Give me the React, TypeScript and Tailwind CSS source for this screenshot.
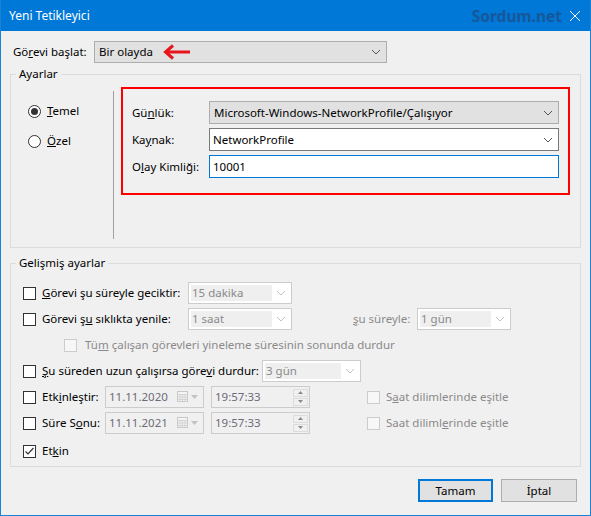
import React from 'react';

const font = { fontFamily: '"Noto Sans", "Segoe UI", sans-serif' };

function Chevron({ color = '#555' }: { color?: string }) {
    return (
        <svg width="10" height="6" viewBox="0 0 10 6" className="shrink-0">
            <polyline points="1,1 5,5 9,1" fill="none" stroke={color} strokeWidth="1" />
        </svg>
    );
}

function Check({ checked = false, disabled = false }: { checked?: boolean; disabled?: boolean }) {
    return (
        <span
            className={`w-[13px] h-[13px] shrink-0 border flex items-center justify-center ${
                disabled ? 'border-[#cccccc] bg-[#f7f7f7]' : 'border-[#333333] bg-white'
            }`}
        >
            {checked && (
                <svg width="11" height="11" viewBox="0 0 11 11">
                    <polyline points="1.5,5.5 4,8 9.5,2" fill="none" stroke="#333" strokeWidth="1.2" />
                </svg>
            )}
        </span>
    );
}

function Radio({ checked = false }: { checked?: boolean }) {
    return (
        <span className="w-[13px] h-[13px] shrink-0 rounded-full border border-[#333333] bg-white flex items-center justify-center">
            {checked && <span className="w-[7px] h-[7px] rounded-full bg-[#333333]" />}
        </span>
    );
}

function DisabledSelect({ value, w }: { value: string; w: string }) {
    return (
        <div className={`${w} h-[22px] border border-[#cccccc] bg-white flex items-center p-[2px]`}>
            <span className="flex-1 h-full bg-[#efefef] text-[#8a8a8a] pl-[1px] leading-[16px]">{value}</span>
            <span className="w-[17px] flex justify-center">
                <Chevron color="#c2c2c2" />
            </span>
        </div>
    );
}

function DateBox({ value }: { value: string }) {
    return (
        <div className="w-[99px] h-[22px] border border-[#cccccc] flex items-center pl-[3px] pr-[5px]">
            <span className="flex-1 text-[#6e6a78]">{value}</span>
            <svg width="12" height="12" viewBox="0 0 12 12" className="mr-[2px]">
                <rect x="0.5" y="0.5" width="10" height="10" fill="#f4f4f4" stroke="#c8c8c8" />
                <path d="M0.5 3.5h10M0.5 6h10M0.5 8.5h10M3 3.5v7M5.5 3.5v7M8 3.5v7" stroke="#d4d4d4" />
            </svg>
            <svg width="7" height="4" viewBox="0 0 7 4">
                <polygon points="0,0 7,0 3.5,4" fill="#c2c2c2" />
            </svg>
        </div>
    );
}

function TimeBox({ value }: { value: string }) {
    return (
        <div className="w-[99px] h-[22px] border border-[#cccccc] flex items-center pl-[3px] pr-[1px]">
            <span className="flex-1 text-[#6e6a78]">{value}</span>
            <div className="flex flex-col gap-[1px]">
                <span className="w-[15px] h-[8px] bg-[#f0f0f0] border border-[#dcdcdc] flex items-center justify-center">
                    <svg width="5" height="3" viewBox="0 0 5 3">
                        <polygon points="0,3 5,3 2.5,0" fill="#8a8a8a" />
                    </svg>
                </span>
                <span className="w-[15px] h-[8px] bg-[#f0f0f0] border border-[#dcdcdc] flex items-center justify-center">
                    <svg width="5" height="3" viewBox="0 0 5 3">
                        <polygon points="0,0 5,0 2.5,3" fill="#8a8a8a" />
                    </svg>
                </span>
            </div>
        </div>
    );
}

export default function App() {
    return (
        <div
            className="w-[591px] h-[516px] bg-[#f0f0f0] border-x border-b border-[#1883d7] flex flex-col text-[11.5px] text-black leading-[16px] whitespace-nowrap"
            style={font}
        >
            {/* title bar */}
            <div className="h-[31px] shrink-0 bg-[#0078d7] flex items-center pl-[8px] pr-[9px] text-white text-[12px]">
                <span className="flex-1">Yeni Tetikleyici</span>
                <span className="text-[15.5px] font-bold text-[#17579a] mr-[7px]">Sordum.net</span>
                <svg width="12" height="12" viewBox="0 0 12 12">
                    <path d="M1 1L11 11M11 1L1 11" stroke="white" strokeWidth="1" />
                </svg>
            </div>

            <div className="flex-1 px-[9px] flex flex-col">
                {/* trigger type */}
                <div className="mt-[10px] h-[22px] flex items-center">
                    <span className="w-[84px] pl-[3px]">
                        Gö<u>r</u>evi başlat:
                    </span>
                    <div className="w-[293px] h-[22px] border border-[#adadad] bg-[#e1e1e1] flex items-center pl-[4px] pr-[5px]">
                        <span>Bir olayda</span>
                        <svg width="30" height="16" viewBox="0 0 30 16" className="ml-[9px]">
                            <path d="M28 8H4" stroke="#e8141b" strokeWidth="3" />
                            <polyline points="11,1.5 3.5,8 11,14.5" fill="none" stroke="#e8141b" strokeWidth="3" />
                        </svg>
                        <span className="flex-1" />
                        <Chevron />
                    </div>
                </div>

                {/* Ayarlar */}
                <fieldset className="mt-[3px] h-[182px] border border-[#dcdcdc] p-0">
                    <legend className="ml-[5px] px-[3px] leading-[16px]">Ayarlar</legend>
                    <div className="flex h-[166px]">
                        <div className="w-[102px] pl-[17px] pt-[21px] flex flex-col gap-[14px]">
                            <div className="flex items-center gap-[6px] h-[16px]">
                                <Radio checked />
                                <span>
                                    <u>T</u>emel
                                </span>
                            </div>
                            <div className="flex items-center gap-[6px] h-[16px]">
                                <Radio />
                                <span>
                                    <u>Ö</u>zel
                                </span>
                            </div>
                        </div>
                        <div className="w-px h-[148px] mt-[9px] bg-[#a0a0a0]" />
                        <div className="ml-[7px] mt-[5px] w-[449px] h-[108px] border-2 border-[#ff0000] pt-[12px] pl-[9px] flex flex-col gap-[4px]">
                            <div className="flex items-center h-[23px]">
                                <span className="w-[77px]">
                                    Gü<u>n</u>lük:
                                </span>
                                <div className="w-[350px] h-[23px] border border-[#adadad] bg-[#e1e1e1] flex items-center pl-[4px] pr-[5px]">
                                    <span className="flex-1">Microsoft-Windows-NetworkProfile/Çalışıyor</span>
                                    <Chevron />
                                </div>
                            </div>
                            <div className="flex items-center h-[23px]">
                                <span className="w-[77px]">
                                    Ka<u>y</u>nak:
                                </span>
                                <div className="w-[350px] h-[23px] border border-[#7a7a7a] bg-white flex items-center pl-[3px] pr-[5px]">
                                    <span className="flex-1">NetworkProfile</span>
                                    <Chevron />
                                </div>
                            </div>
                            <div className="flex items-center h-[23px]">
                                <span className="w-[77px]">
                                    O<u>l</u>ay Kimliği:
                                </span>
                                <div className="w-[350px] h-[23px] border border-[#0078d7] bg-white flex items-center pl-[3px]">
                                    10001
                                </div>
                            </div>
                        </div>
                    </div>
                </fieldset>

                {/* Gelişmiş ayarlar */}
                <fieldset className="mt-[7px] h-[212px] border border-[#dcdcdc] p-0">
                    <legend className="ml-[5px] px-[3px] leading-[16px]">Gelişmiş ayarlar</legend>
                    <div className="pl-[12px] pt-[11px] flex flex-col gap-[4px]">
                        <div className="flex items-center h-[22px]">
                            <Check />
                            <span className="ml-[6px] w-[146px]">
                                <u>G</u>örevi şu süreyle geciktir:
                            </span>
                            <DisabledSelect value="15 dakika" w="w-[104px]" />
                        </div>
                        <div className="flex items-center h-[22px]">
                            <Check />
                            <span className="ml-[6px] w-[146px]">
                                Görevi ş<u>u</u> sıklıkta yenile:
                            </span>
                            <DisabledSelect value="1 saat" w="w-[104px]" />
                            <span className="ml-[61px] w-[64px] text-[#8a8a8a]">
                                <u>ş</u>u süreyle:
                            </span>
                            <DisabledSelect value="1 gün" w="w-[94px]" />
                        </div>
                        <div className="flex items-center h-[22px] pl-[41px]">
                            <Check disabled />
                            <span className="ml-[8px] text-[#8a8a8a]">
                                Tü<u>m</u> çalışan görevleri yineleme süresinin sonunda durdur
                            </span>
                        </div>
                        <div className="flex items-center h-[22px]">
                            <Check />
                            <span className="ml-[6px] w-[220px]">
                                <u>Ş</u>u süreden uzun çalışırsa göre<u>v</u>i durdur:
                            </span>
                            <DisabledSelect value="3 gün" w="w-[99px]" />
                        </div>
                        <div className="flex items-center h-[22px]">
                            <Check />
                            <span className="ml-[6px] w-[63px]">
                                Etk<u>i</u>nleştir:
                            </span>
                            <DateBox value="11.11.2020" />
                            <span className="ml-[7px]" />
                            <TimeBox value="19:57:33" />
                            <span className="ml-[57px]" />
                            <Check disabled />
                            <span className="ml-[6px] text-[#8a8a8a]">
                                S<u>a</u>at dilimlerinde eşitle
                            </span>
                        </div>
                        <div className="flex items-center h-[22px]">
                            <Check />
                            <span className="ml-[6px] w-[63px]">
                                Süre S<u>o</u>nu:
                            </span>
                            <DateBox value="11.11.2021" />
                            <span className="ml-[7px]" />
                            <TimeBox value="19:57:33" />
                            <span className="ml-[57px]" />
                            <Check disabled />
                            <span className="ml-[6px] text-[#8a8a8a]">
                                Saat diliml<u>e</u>rinde eşitle
                            </span>
                        </div>
                        <div className="flex items-center h-[22px] mt-[2px]">
                            <Check checked />
                            <span className="ml-[6px]">
                                Et<u>k</u>in
                            </span>
                        </div>
                    </div>
                </fieldset>

                {/* buttons */}
                <div className="mt-[12px] flex justify-end gap-[8px] pr-[4px]">
                    <button className="w-[75px] h-[23px] border-2 border-[#0078d7] bg-[#e1e1e1]">Tamam</button>
                    <button className="w-[76px] h-[23px] border border-[#adadad] bg-[#e1e1e1]">İptal</button>
                </div>
            </div>
        </div>
    );
}
